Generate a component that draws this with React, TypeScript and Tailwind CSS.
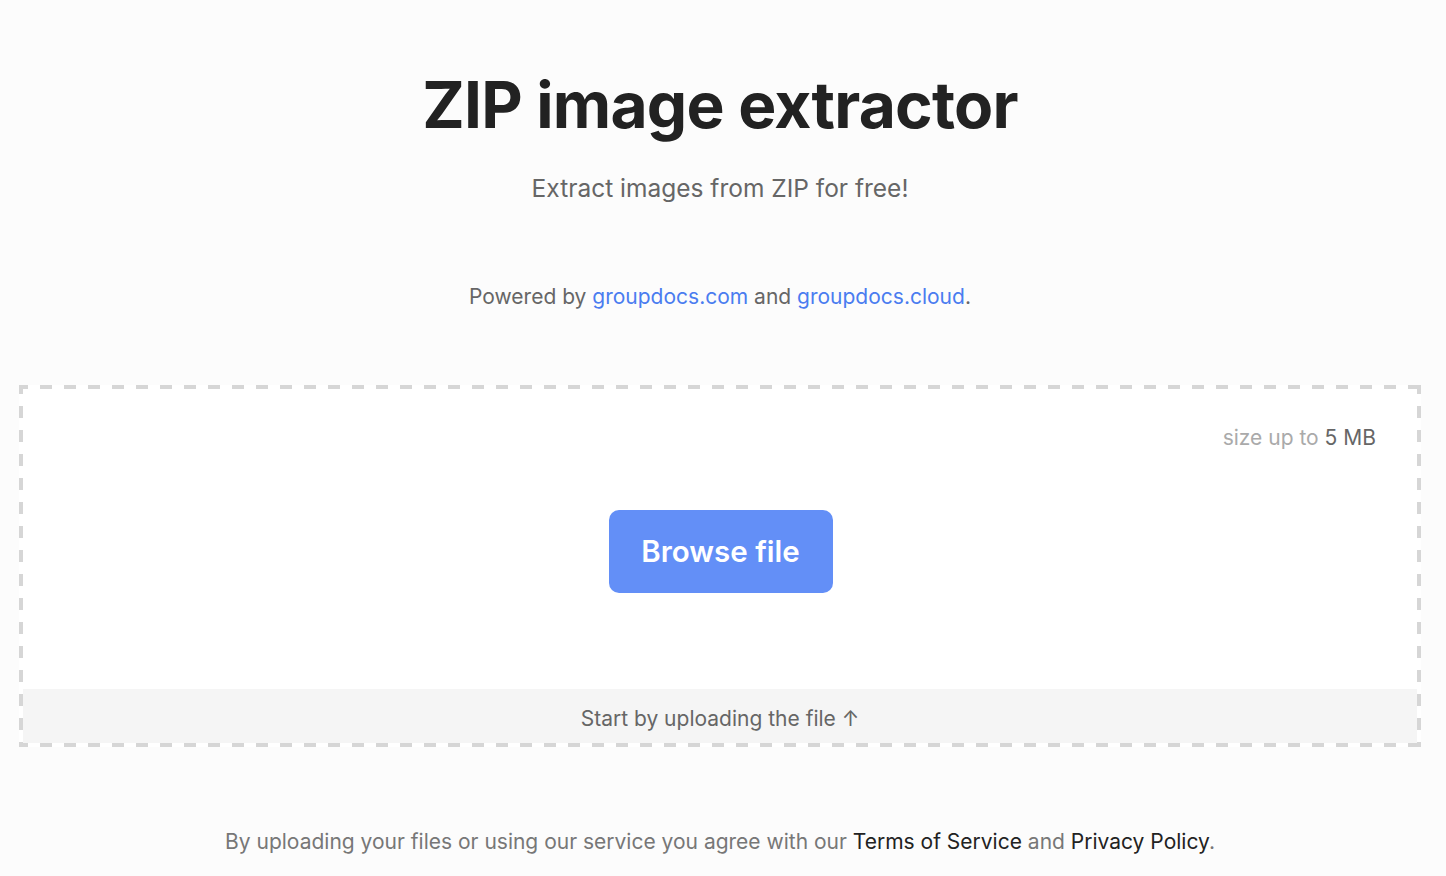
import React from "react";

export default function App() {
  return (
    <div
      className="min-h-[876px] w-full bg-[#fcfcfc] pr-[6px] text-[#222]"
      style={{ fontFamily: "Inter, 'Noto Sans', sans-serif" }}
    >
      <div className="flex flex-col items-center pt-[66px]">
        <h1 className="text-[64px] font-bold leading-[77px] tracking-[-0.012em] text-[#222]">
          ZIP image extractor
        </h1>
        <p className="mt-[30px] text-[24.5px] leading-[30px] text-[#666]">
          Extract images from ZIP for free!
        </p>
        <p className="mt-[80px] text-[21px] leading-[28px] text-[#666]">
          Powered by{" "}
          <a className="text-[#4a7cf0]">groupdocs.com</a> and{" "}
          <a className="text-[#4a7cf0]">groupdocs.cloud</a>.
        </p>
      </div>

      <div className="mx-[19px] mt-[74px] bg-white p-[4px] [background-image:linear-gradient(90deg,#d6d6d6_12px,transparent_12px),linear-gradient(90deg,#d6d6d6_12px,transparent_12px),linear-gradient(180deg,#d6d6d6_12px,transparent_12px),linear-gradient(180deg,#d6d6d6_12px,transparent_12px)] [background-size:24px_4px,24px_4px,4px_24px,4px_24px] [background-repeat:repeat-x,repeat-x,repeat-y,repeat-y] [background-position:21px_0,21px_100%,0_21px,100%_21px]">
        <div className="flex h-[300px] flex-col">
          <div className="flex justify-end pr-[41px] pt-[37px] text-[21px] leading-[24px] text-[#aaa]">
            <span>
              size up to <span className="text-[#666]">5 MB</span>
            </span>
          </div>
          <div className="mt-[60px] flex justify-center pl-[1px]">
            <button className="flex h-[83px] w-[224px] items-center justify-center rounded-[10px] bg-[#638ff7] text-[29.5px] font-semibold text-white">
              Browse file
            </button>
          </div>
        </div>
        <div className="flex h-[54px] items-center justify-center bg-[#f5f5f5] pt-[6px] text-[21px] text-[#666]">
          Start by uploading the file ↑
        </div>
      </div>

      <p className="mt-[81px] text-center text-[21px] leading-[28px] text-[#777]">
        By uploading your files or using our service you agree with our{" "}
        <a className="text-[#222]">Terms of Service</a> and{" "}
        <a className="text-[#222]">Privacy Policy</a>.
      </p>
    </div>
  );
}
